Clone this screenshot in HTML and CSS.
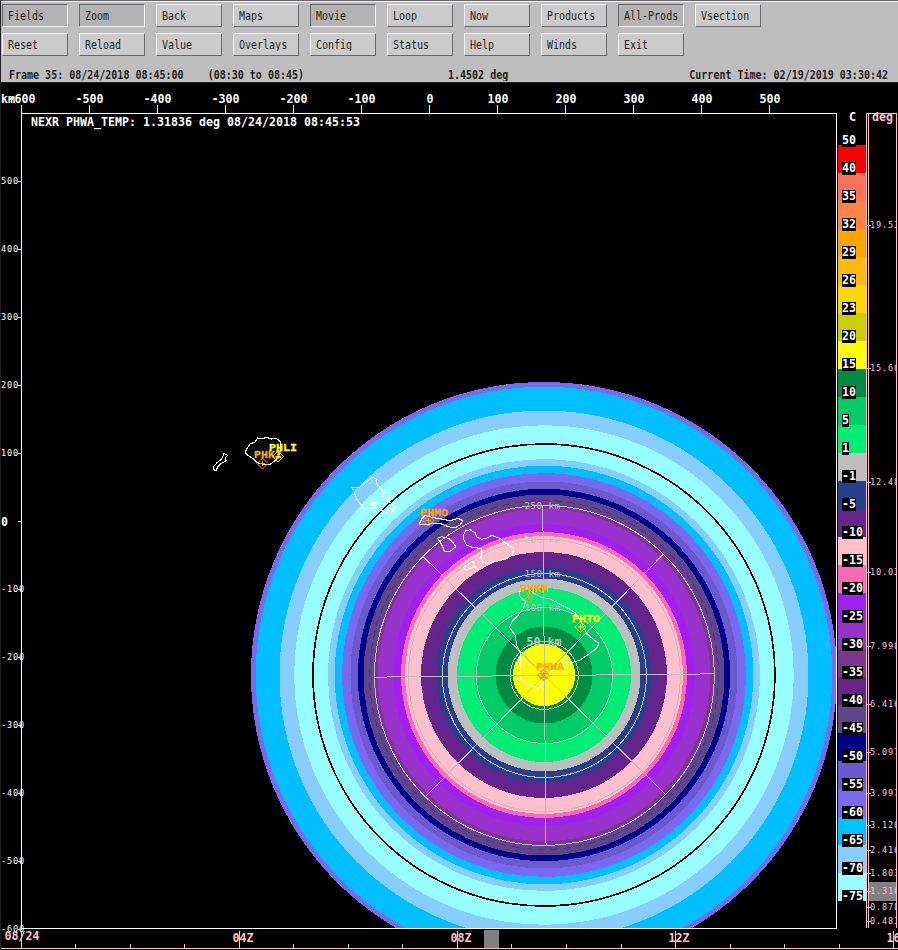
FILE: index.html
```html
<!DOCTYPE html>
<html lang="en">
<head>
<meta charset="utf-8">
<title>Radar display</title>
<link rel="stylesheet" href="styles.css">
</head>
<body>
<header class="toolbar">
  <div class="buttons">
    <button class="on"><span>Fields</span></button><button class="on"><span>Zoom</span></button><button><span>Back</span></button><button><span>Maps</span></button><button class="on"><span>Movie</span></button><button><span>Loop</span></button><button><span>Now</span></button><button><span>Products</span></button><button class="on"><span>All-Prods</span></button><button><span>Vsection</span></button>
    <button><span>Reset</span></button><button><span>Reload</span></button><button><span>Value</span></button><button><span>Overlays</span></button><button><span>Config</span></button><button><span>Status</span></button><button><span>Help</span></button><button><span>Winds</span></button><button><span>Exit</span></button>
  </div>
  <div class="status">
    <span class="frame">Frame 35: 08/24/2018 08:45:00    (08:30 to 08:45)</span>
    <span class="angle">1.4502 deg</span>
    <span class="now">Current Time: 02/19/2019 03:30:42</span>
  </div>
</header>
<main class="display">
  <svg class="plot" viewBox="0 83 837 848" width="837" height="848">
    <defs>
      <clipPath id="frame"><rect x="22" y="114" width="814" height="814"/></clipPath>
    </defs>
    <g clip-path="url(#frame)" shape-rendering="crispEdges">
      <g class="rings">
        <circle cx="544" cy="675" r="293" fill="#7b68ee"/>
        <circle cx="544" cy="675" r="288.3" fill="#00bfff"/>
        <circle cx="544" cy="675" r="264.5" fill="#87ceff"/>
        <circle cx="544" cy="675" r="249.7" fill="#97ffff"/>
        <circle cx="544" cy="675" r="215.8" fill="#87ceff"/>
        <circle cx="544" cy="675" r="209.3" fill="#00bfff"/>
        <circle cx="544" cy="675" r="201.8" fill="#7b68ee"/>
        <circle cx="544" cy="675" r="193.5" fill="#6a5acd"/>
        <circle cx="544" cy="675" r="186.2" fill="#00008b"/>
        <circle cx="544" cy="675" r="180.5" fill="#5d478b"/>
        <circle cx="544" cy="675" r="171.3" fill="#7a378b"/>
        <circle cx="544" cy="675" r="166.3" fill="#9932cc"/>
        <circle cx="544" cy="675" r="151" fill="#a020f0"/>
        <circle cx="544" cy="675" r="143" fill="#ff69b4"/>
        <circle cx="544" cy="675" r="139" fill="#ffc0cb"/>
        <circle cx="544" cy="675" r="123" fill="#68228b"/>
        <circle cx="544" cy="675" r="107.7" fill="#27408b"/>
        <circle cx="544" cy="675" r="96.5" fill="#bebebe"/>
        <circle cx="544" cy="675" r="87" fill="#00ee76"/>
        <circle cx="544" cy="675" r="69" fill="#00cd66"/>
        <circle cx="544" cy="675" r="48.5" fill="#008b45"/>
        <circle cx="544" cy="675" r="31.2" fill="#ffff00"/>
      </g>
      <g fill="none">
        <circle cx="544" cy="675" r="231" stroke="#000" stroke-width="1.7"/>
        <circle cx="544" cy="675" r="174.5" stroke="#68228b" stroke-dasharray="8 5"/>
        <circle cx="544" cy="675" r="112.5" stroke="#27408b" stroke-dasharray="7 6"/>
      </g>
      <g class="grid" transform="rotate(-.55 544.4 675.5)">
        <circle cx="544.4" cy="675.5" r="34"/><circle cx="544.4" cy="675.5" r="68"/><circle cx="544.4" cy="675.5" r="102"/><circle cx="544.4" cy="675.5" r="136"/><circle cx="544.4" cy="675.5" r="170"/>
        <path d="M374.4 675.5H714.4M544.4 505.5V845.5M424.2 555.3L664.6 795.7M664.6 555.3L424.2 795.7"/>
      </g>
      <g class="coast" transform="translate(200 420) scale(.33333)">
        <path d="M72 100L82 106 77 113 78 122 62 132 54 140 48 152 40 148 42 138 52 127 62 120 68 110Z"/>
        <path d="M136 96L142 84 150 72 165 66 173 54 186 56 200 52 215 57 228 54 240 64 243 80 238 104 230 118 212 132 190 133 172 128 160 116 145 107 138 100Z"/>
        <path d="M455 203L478 203 492 190 505 181 518 172 529 178 531 192 540 204 552 218 548 226 556 236 565 230 572 238 562 243 574 250 586 262 580 274 570 270 560 276 545 272 530 262 515 266 495 270 480 250 466 232 464 215Z"/>
        <ellipse cx="519" cy="252" rx="10" ry="5" fill="#fff"/>
        <path d="M548 228L564 240 570 232M572 268L580 264M228 116l6-3"/>
      </g>
      <g class="coast" transform="translate(400 480) scale(.33333)">
        <path d="M58 132L66 115 75 106 100 113 125 117 150 122 175 115 188 122 180 135 165 144 145 140 125 132 95 131 70 135Z"/>
        <path d="M112 175L125 170 148 176 160 188 167 200 150 215 133 214 128 200 120 185Z"/>
        <path d="M190 165L197 153 210 149 225 158 230 170 245 178 262 174 275 166 300 175 318 190 340 205 338 225 315 238 285 245 262 251 248 246 243 232 244 205 220 203 200 195 192 180Z"/>
        <path d="M190 262L205 252 215 245 222 248 220 256 227 262 215 264 205 268 195 269Z"/>
        <path d="M357 345L362 327 375 318 393 333 405 342 425 352 450 357 475 370 505 385 525 398 537 415 550 440 560 460 580 478 597 490 590 505 565 523 540 540 520 547 495 548 470 562 445 580 432 600 425 618 412 627 398 618 380 608 365 600 357 580 363 545 362 520 350 495 345 465 328 442 338 422 355 405 370 385 377 365 365 355Z"/>
      </g>
    </g>
    <g class="range">
      <text x="524.5" y="509">250 km</text><text x="524.5" y="543">200 km</text><text x="524.5" y="577">150 km</text><text x="524.5" y="611">100 km</text>
      <text class="big" x="526.5" y="646">50 km</text>
    </g>
    <g class="site orange">
      <path d="M257 463.5l5.5-5.5 5.5 5.5-5.5 5.5zM260 463.5h5M262.500 461v5M423 520.500l5.500-5.500 5.500 5.500-5.500 5.500zM426 520.500h5M428.500 518v5M523 597.500l5.500-5.500 5.500 5.500-5.500 5.500zM526 597.500h5M528.500 595v5"/>
      <text x="254" y="458">PHKI</text><text x="420" y="516">PHMO</text><text x="520" y="591.500">PHKM</text><text x="536" y="670">PHWA</text>
    </g>
    <path class="home" d="M538 675l5.500-5.500 5.500 5.500-5.500 5.500zM540 671l7 8M547 671l-7 8M540.500 675h6M543.500 672v6"/>
    <g class="site yellow">
      <path d="M272.500 456.500l5.500-5.500 5.500 5.500-5.500 5.500zM275.500 456.500h5M278 454v5M575 627l5.500-5.500 5.500 5.500-5.500 5.500zM578 627h5M580.500 624.500v5"/>
      <text x="269" y="451">PHLI</text><text x="572" y="622">PHTO</text>
    </g>
    <path class="axis" d="M21.500 113.500H836.500V928.500H21.500ZM21.500 105v8M89.500 105v8M157.500 105v8M225.500 105v8M293.500 105v8M361.500 105v8M429.500 105v8M497.500 105v8M565.500 105v8M633.500 105v8M701.500 105v8M769.500 105v8M18 181.500h4M18 249.500h4M18 317.500h4M18 385.500h4M18 453.500h4M18 521.500h4M18 589.500h4M18 657.500h4M18 725.500h4M18 793.500h4M18 861.500h4M18 929.500h4"/>
    <g class="label mid">
      <text x="21.500" y="103">-600</text><text x="89.500" y="103">-500</text><text x="157.500" y="103">-400</text><text x="225.500" y="103">-300</text><text x="293.500" y="103">-200</text><text x="361.500" y="103">-100</text><text x="430" y="103">0</text><text x="498" y="103">100</text><text x="566" y="103">200</text><text x="634" y="103">300</text><text x="702" y="103">400</text><text x="770" y="103">500</text>
    </g>
    <g class="label"><text x="1" y="103">km</text><text x="31" y="126">NEXR PHWA_TEMP: 1.31836 deg 08/24/2018 08:45:53</text><text x="1" y="526">0</text></g>
    <g class="small">
      <text x="1" y="184">500</text><text x="1" y="252">400</text><text x="1" y="320">300</text><text x="1" y="388">200</text><text x="1" y="456">100</text><text x="1" y="592">-100</text><text x="1" y="660">-200</text><text x="1" y="728">-300</text><text x="1" y="796">-400</text><text x="1" y="864">-500</text><text x="1" y="932">-600</text>
    </g>
  </svg>
  <section class="legend">
    <div class="unit">C</div>
    <div class="band none"><b>50</b></div>
    <div class="band c40"><b>40</b></div>
    <div class="band c35"><b>35</b></div>
    <div class="band c32"><b>32</b></div>
    <div class="band c29"><b>29</b></div>
    <div class="band c26"><b>26</b></div>
    <div class="band c23"><b>23</b></div>
    <div class="band c20"><b>20</b></div>
    <div class="band c15"><b>15</b></div>
    <div class="band c10"><b>10</b></div>
    <div class="band c5"><b>5</b></div>
    <div class="band c1"><b>1</b></div>
    <div class="band m1"><b>-1</b></div>
    <div class="band m5"><b>-5</b></div>
    <div class="band m10"><b>-10</b></div>
    <div class="band m15"><b>-15</b></div>
    <div class="band m20"><b>-20</b></div>
    <div class="band m25"><b>-25</b></div>
    <div class="band m30"><b>-30</b></div>
    <div class="band m35"><b>-35</b></div>
    <div class="band m40"><b>-40</b></div>
    <div class="band m45"><b>-45</b></div>
    <div class="band m50"><b>-50</b></div>
    <div class="band m55"><b>-55</b></div>
    <div class="band m60"><b>-60</b></div>
    <div class="band m65"><b>-65</b></div>
    <div class="band m70"><b>-70</b></div>
    <div class="band m75"><b>-75</b></div>
  </section>
  <svg class="elev" viewBox="866 83 31 848" width="31" height="848">
    <rect x="869" y="882" width="28" height="19" fill="#808080"/>
    <path class="pink" d="M866.500 928V113.500H896.500V928M868.500 113v815M867 225.500h4M867 368.500h4M867 482.500h4M867 572.500h4M867 646.500h4M867 704.500h4M867 752.500h4M867 793.500h4M867 825.500h4M867 850.500h4M867 873.500h4M867 891.500h4M867 907.500h4M867 921.500h4"/>
    <text class="deg" x="872" y="121">deg</text>
    <g class="small pinktext">
      <text x="870" y="228">19.53</text><text x="870" y="371">15.60</text><text x="870" y="485">12.48</text><text x="870" y="575">10.03</text><text x="870" y="649">7.998</text><text x="870" y="707">6.416</text><text x="870" y="755">5.097</text><text x="870" y="796">3.997</text><text x="870" y="828">3.120</text><text x="870" y="853">2.416</text><text x="870" y="876">1.803</text><text x="870" y="894">1.318</text><text x="870" y="910">0.878</text><text x="870" y="924">0.483</text>
    </g>
  </svg>
</main>
<svg class="time" viewBox="0 931 898 19" width="898" height="19">
  <rect x="484" y="930" width="15" height="18" fill="#808080"/>
  <path class="pink" d="M0 948.500H898M21.500 931v17M239.500 931v17M457.500 931v17M675.500 931v17M893.500 931v17M75.500 944v4M130.500 944v4M184.500 944v4M293.500 944v4M348.500 944v4M402.500 944v4M511.500 944v4M566.500 944v4M621.500 944v4M730.500 944v4M784.500 944v4M839.500 944v4"/>
  <g class="label pinktext"><text x="4.500" y="940">08/24</text><text x="232.500" y="942">04Z</text><text x="450.500" y="942">08Z</text><text x="668.500" y="942">12Z</text><text x="886.500" y="942">16Z</text></g>
</svg>
</body>
</html>
```
FILE: styles.css
```css
* { box-sizing: border-box; }
body { margin: 0; width: 898px; height: 950px; overflow: hidden; background: #000; border-left: 1px solid #231f20; font-family: "DejaVu Sans Mono", monospace; }

.toolbar { height: 83px; margin-left: -1px; background: #bebebe; border-top: 1px solid #68666a; border-bottom: 1px solid #231f20; box-shadow: inset 0 1px #f2f2f2; padding: 3px 0 0 2px; }
.buttons { display: grid; grid-template-columns: repeat(10, 66px); grid-auto-rows: 23px; gap: 6px 11px; }
button { border: 1px solid; border-color: #f4f4f4 #68666a #68666a #f4f4f4; background: #cbcbcb; padding: 0 0 0 5px; margin: 0; text-align: left; font: 10px/21px "DejaVu Sans Mono", monospace; color: #231f20; white-space: nowrap; }
button.on { background: #b3b3b3; border-color: #68666a #f4f4f4 #f4f4f4 #68666a; }
button span { display: block; transform: scaleY(1.15); }
.status { display: grid; grid-template-columns: 439px 1fr auto; margin-top: 10px; padding: 0 10px 0 7px; font: bold 10px/17px "DejaVu Sans Mono", monospace; color: #231f20; white-space: pre; }
.status span { transform: scaleY(1.15); }

.display { display: grid; grid-template-columns: 837px 29px 31px; height: 848px; margin-left: -1px; }
svg { display: block; }
.plot, .time { overflow: visible; }
.time { margin-left: -1px; }
text { white-space: pre; }
.grid { fill: none; stroke: #bebebe; stroke-width: 1; }
.coast { fill: none; stroke: #fff; stroke-width: 3.2; }
.axis { fill: none; stroke: #fff; shape-rendering: crispEdges; }
.pink { fill: none; stroke: #ffc0cb; shape-rendering: crispEdges; }
.label, .deg { font: bold 11.63px "DejaVu Sans Mono", monospace; fill: #fff; }
.mid { text-anchor: middle; }
.small { font: 8.6px "DejaVu Sans Mono", monospace; letter-spacing: .82px; fill: #fff; }
.pinktext, .deg { fill: #ffc0cb; }
.range { font: 9px "DejaVu Sans Mono", monospace; letter-spacing: .58px; fill: #bebebe; }
.range .big { font: bold 11.63px "DejaVu Sans Mono", monospace; letter-spacing: 0; }
.site { font: bold 11.67px "Liberation Mono", monospace; }
.site text { stroke-width: .3px; }
.site path, .home { fill: none; stroke-width: 1; }
.orange { fill: #ffa500; }
.orange path, .orange text { stroke: #ffa500; }
.yellow { fill: #ff0; }
.yellow path, .yellow text { stroke: #ff0; }
.home { stroke: #daa520; stroke-width: 1.3; }

.legend { display: flex; flex-direction: column; padding: 28px 0 0 1px; color: #fff; font: bold 11.63px/13px "DejaVu Sans Mono", monospace; }
.unit { height: 6px; padding-left: 11px; }
.band { display: flex; align-items: flex-end; flex: 0 0 28px; padding-left: 4px; }
.band b { position: relative; z-index: 1; margin-bottom: -2px; height: 13px; background: #000; }
.c40 { background: #f00; } .c35 { background: #ff7256; } .c32 { background: #ff8247; }
.c29 { background: #ffa500; } .c26 { background: #ffb90f; } .c23 { background: #ffd700; }
.c20 { background: #cdcd00; } .c15 { background: #ff0; } .c10 { background: #008b45; }
.c5 { background: #00cd66; } .c1 { background: #00ee76; } .m1 { background: #bebebe; }
.m5 { background: #27408b; } .m10 { background: #68228b; } .m15 { background: #ffc0cb; }
.m20 { background: #ff69b4; } .m25 { background: #a020f0; } .m30 { background: #9932cc; }
.m35 { background: #7a378b; } .m40 { background: #68228b; } .m45 { background: #5d478b; }
.m50 { background: #00008b; } .m55 { background: #6a5acd; } .m60 { background: #7b68ee; }
.m65 { background: #00bfff; } .m70 { background: #87ceff; } .m75 { background: #97ffff; }
```
